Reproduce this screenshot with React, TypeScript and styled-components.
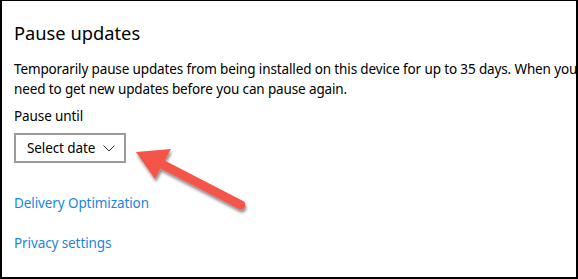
import React from 'react'
import styled, { createGlobalStyle } from 'styled-components'

const GlobalStyle = createGlobalStyle`
  html, body {
    margin: 0;
    padding: 0;
    background: #ffffff;
  }
`

export default function App() {
  return (
    <>
      <GlobalStyle />
      <Frame>
        <Title>Pause updates</Title>
        <Description>
          Temporarily pause updates from being installed on this device for up to 35 days. When you
          <br />
          need to get new updates before you can pause again.
        </Description>
        <FieldLabel>Pause until</FieldLabel>
        <SelectBox>
          <span>Select date</span>
          <Chevron width="12" height="7" viewBox="0 0 12 7">
            <path d="M0.5 0.5 L6 6 L11.5 0.5" fill="none" stroke="#333" strokeWidth="1" />
          </Chevron>
        </SelectBox>
        <Links>
          <Link>Delivery Optimization</Link>
          <Link>Privacy settings</Link>
        </Links>
        <Arrow width="130" height="80" viewBox="0 0 130 80">
          <defs>
            <filter id="shadow" x="-20%" y="-20%" width="140%" height="150%">
              <feDropShadow dx="1" dy="3" stdDeviation="1.6" floodColor="#000" floodOpacity="0.45" />
            </filter>
          </defs>
          <g filter="url(#shadow)">
            <line x1="20" y1="18" x2="111" y2="65" stroke="#f5544a" strokeWidth="9" strokeLinecap="round" />
            <polygon points="6,12 41,9 25,39" fill="#f5544a" />
          </g>
        </Arrow>
      </Frame>
    </>
  )
}

const Frame = styled.div`
  position: relative;
  box-sizing: border-box;
  width: 578px;
  height: 279px;
  border: 2px solid #000;
  border-top-width: 1px;
  padding: 20px 0 0 12px;
  overflow: hidden;
  font-family: 'Noto Sans', 'Open Sans', sans-serif;
  color: #000;
`

const Title = styled.h1`
  margin: 0;
  font-size: 18.3px;
  font-weight: 400;
  line-height: 24px;
`

const Description = styled.p`
  margin: 14px 0 0;
  width: 562px;
  font-size: 13.5px;
  line-height: 20px;
  letter-spacing: -0.13px;
  white-space: nowrap;
`

const FieldLabel = styled.div`
  margin-top: 7px;
  font-size: 13.5px;
  line-height: 20px;
  letter-spacing: -0.1px;
`

const SelectBox = styled.div`
  box-sizing: border-box;
  margin-top: 7px;
  width: 112px;
  height: 30px;
  border: 2px solid #9a9a9a;
  display: flex;
  align-items: center;
  justify-content: space-between;
  padding: 0 9px 0 11px;
  font-size: 13.5px;
  letter-spacing: -0.1px;
`

const Chevron = styled.svg`
  display: block;
`

const Links = styled.div`
  margin-top: 30px;
  display: flex;
  flex-direction: column;
  gap: 20px;
`

const Link = styled.a`
  color: #1a86dc;
  font-size: 13.5px;
  line-height: 20px;
  letter-spacing: -0.1px;
  cursor: pointer;
`

const Arrow = styled.svg`
  position: absolute;
  left: 128px;
  top: 139px;
  overflow: visible;
`
